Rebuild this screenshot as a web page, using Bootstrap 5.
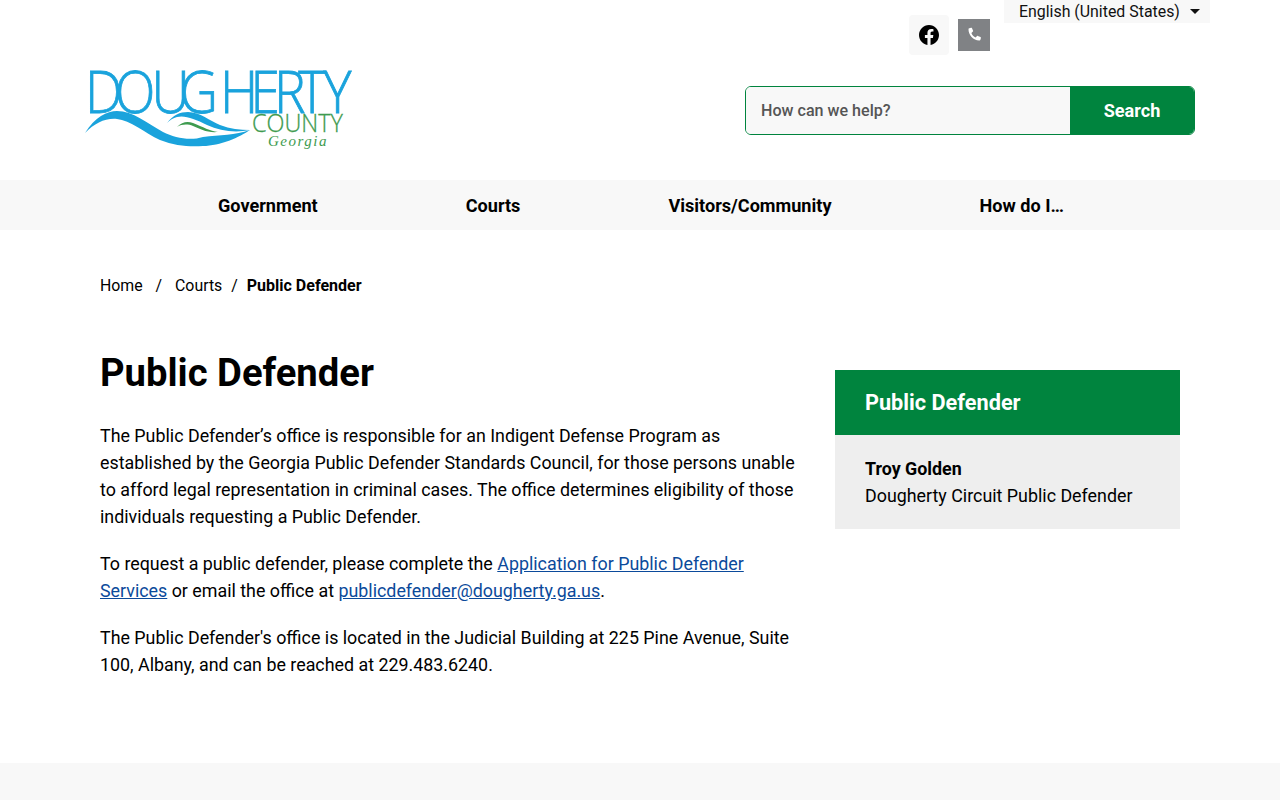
<!DOCTYPE html>
<html lang="en">
<head>
  <meta charset="UTF-8" />
  <title>Public Defender</title>
  <link href="https://cdn.jsdelivr.net/npm/bootstrap@5.3.3/dist/css/bootstrap.min.css" rel="stylesheet">
  <style>
    body { font-family:Roboto,sans-serif; font-size:17.85px; line-height:27px; color:#000; background:#fff; overflow:hidden }
    a { color:#0b4a9b }
    .site-head { height:180px }
    .top-tools { padding-right:70px; height:55px }
    .soc-fb { width:40px; height:40px; background:#f8f8f8; border-radius:4px; margin-top:15px }
    .soc-ph { width:32px; height:32px; background:#808285; margin:19px 14px 0 9px }
    .lang-pick { width:206px; height:23px; background:#f8f8f8; font-size:15.9px; line-height:23px; padding-left:15px; color:#111 }
    .lang-arrow { width:0; height:0; border:5px solid transparent; border-top-color:#111; border-bottom:0; margin-left:10px }
    .head-main { padding:0 85px; height:125px }
    .logo-svg { margin-top:10px; align-self:flex-start }
    .search-box { width:450px; height:49px; margin-bottom:15px; border:1px solid #00843e; border-radius:6px; overflow:hidden }
    .search-box input { width:324px; background:#f8f8f8; border:0; outline:0; padding:0 15px; font-size:16.1px; font-weight:500; color:#555 }
    .search-box input::placeholder { color:#555; opacity:1 }
    .search-box button { flex:1; background:#00843e; color:#fff; border:0; font-size:18.1px; font-weight:700 }
    .main-nav { height:50px; background:#f8f8f8; padding-left:218px; gap:148px }
    .main-nav a { color:#000; font-size:18.1px; font-weight:700; text-decoration:none; line-height:52px }
    .crumbs { padding:42px 100px 0; font-size:15.85px; height:84px }
    .crumbs a { color:#000; text-decoration:none }
    .crumbs strong { font-size:16px }
    .crumb-sep { padding:0 9px }
    .page-body { padding:0 100px; gap:35px; height:449px }
    .page-text { width:700px }
    .page-text h1 { font-size:38.2px; font-weight:700; line-height:43px; margin:38px 0 27px }
    .page-text p { margin-bottom:20px }
    .side-box { width:345px; margin-top:56px }
    .side-head { background:#00843e; color:#fff; font-size:21.7px; font-weight:700; padding:0 30px; height:65px; line-height:66px }
    .side-info { background:#eee; padding:20px 30px; height:94px }
    .foot-band { height:60px; background:#f8f8f8 }
  </style>
</head>
<body>
<header class="site-head">
  <div class="top-tools d-flex justify-content-end align-items-start">
    <a class="soc-fb d-flex align-items-center justify-content-center" href="#" aria-label="Facebook">
      <svg width="20" height="20" viewBox="0 0 16 16" fill="#000"><path d="M16 8.05C16 3.6 12.4 0 8 0S0 3.6 0 8.05c0 4 2.93 7.32 6.75 7.95v-5.62H4.72V8.05h2.03V6.27c0-2.01 1.2-3.13 3.02-3.13.88 0 1.8.16 1.8.16v1.98h-1.01c-1 0-1.31.62-1.31 1.26v1.51h2.22l-.36 2.33H9.25V16C13.07 15.37 16 12.05 16 8.05z"/></svg>
    </a>
    <a class="soc-ph d-flex align-items-center justify-content-center" href="#" aria-label="Phone">
      <svg width="16" height="16" viewBox="0 0 16 16" fill="#fff"><path d="M3.3 1.2 5 .7c.4-.1.7.1.9.4l1.2 2.7c.1.3 0 .6-.2.8L5.400 5.900c.7 1.900 2.300 3.700 4.300 4.700l1.300-1.500c.2-.2.500-.3.800-.2l2.700 1.200c.3.200.5.500.4.900l-.5 1.800c-.1.400-.5.700-.9.700C7.600 13.700 2.300 8.300 2.500 2.100c0-.4.300-.8.800-.9z"/></svg>
    </a>
    <div class="lang-pick d-flex align-items-center">English (United States)<span class="lang-arrow"></span></div>
  </div>
  <div class="head-main d-flex justify-content-between align-items-center">
    <a href="#" class="logo-svg" aria-label="Dougherty County Georgia">
      <svg width="270" height="90" viewBox="0 0 270 90">
        <text transform="scale(.9 1)" x="0 33 74 105 150 184 210 237 265" y="48" font-family="Open Sans" font-weight="300" font-size="59" fill="#1aa3dc" stroke="#1aa3dc" stroke-width=".8">DOUGHERTY</text>
        <text x="167" y="67" font-family="Open Sans" font-weight="300" font-size="26" fill="#3e9b4f" stroke="#3e9b4f" stroke-width=".3" textLength="91" lengthAdjust="spacingAndGlyphs">COUNTY</text>
        <text x="183" y="81" font-family="Liberation Serif" font-style="italic" font-size="15" letter-spacing="1.500" fill="#3e9b4f">Georgia</text>
        <path d="M0 68C10 52 22 46 32 46 48 46 62 58 78 67 90 73 105 76 118 72 135 70 150 70 165 65 155 72 135 81 118 81 105 82 90 81 75 75 60 68 45 55 32 54 20 53 10 58 0 68z" fill="#1aa3dc"/>
        <path d="M82 58C88 50 95 47 103 47 115 47 125 56 135 60 145 64 155 65 165 65 150 68 135 66 122 60 110 54 100 50 92 52 88 53 85 55 82 58z" fill="#1aa3dc"/>
        <path d="M92 62C97 57 102 56 108 58 118 62 125 66 133 67 122 68 115 64 108 61 103 59 97 59 92 62z" fill="#3e9b4f"/>
      </svg>
    </a>
    <form class="search-box d-flex" onsubmit="return false">
      <input type="text" placeholder="How can we help?">
      <button type="submit">Search</button>
    </form>
  </div>
</header>
<nav class="main-nav d-flex">
  <a href="#">Government</a>
  <a href="#">Courts</a>
  <a href="#">Visitors/Community</a>
  <a href="#">How do I…</a>
</nav>
<div class="crumbs">
  <a href="#">Home</a><span class="crumb-sep">&nbsp;/&nbsp;</span><a href="#">Courts</a><span class="crumb-sep">/</span><strong class="fw-bold">Public Defender</strong>
</div>
<main class="page-body d-flex">
  <div class="page-text">
    <h1>Public Defender</h1>
    <p>The Public Defender’s office is responsible for an Indigent Defense Program as established by the Georgia Public Defender Standards Council, for those persons unable to afford legal representation in criminal cases. The office determines eligibility of those individuals requesting a Public Defender.</p>
    <p>To request a public defender, please complete the <a href="#">Application for Public Defender Services</a> or email the office at <a href="#">publicdefender@dougherty.ga.us</a>.</p>
    <p>The Public Defender's office is located in the Judicial Building at 225 Pine Avenue, Suite 100, Albany, and can be reached at 229.483.6240.</p>
  </div>
  <aside class="side-box">
    <div class="side-head">Public Defender</div>
    <div class="side-info"><strong>Troy Golden</strong><br>Dougherty Circuit Public Defender</div>
  </aside>
</main>
<div class="foot-band"></div>
<script src="https://cdn.jsdelivr.net/npm/bootstrap@5.3.3/dist/js/bootstrap.bundle.min.js"></script>
</body>
</html>
